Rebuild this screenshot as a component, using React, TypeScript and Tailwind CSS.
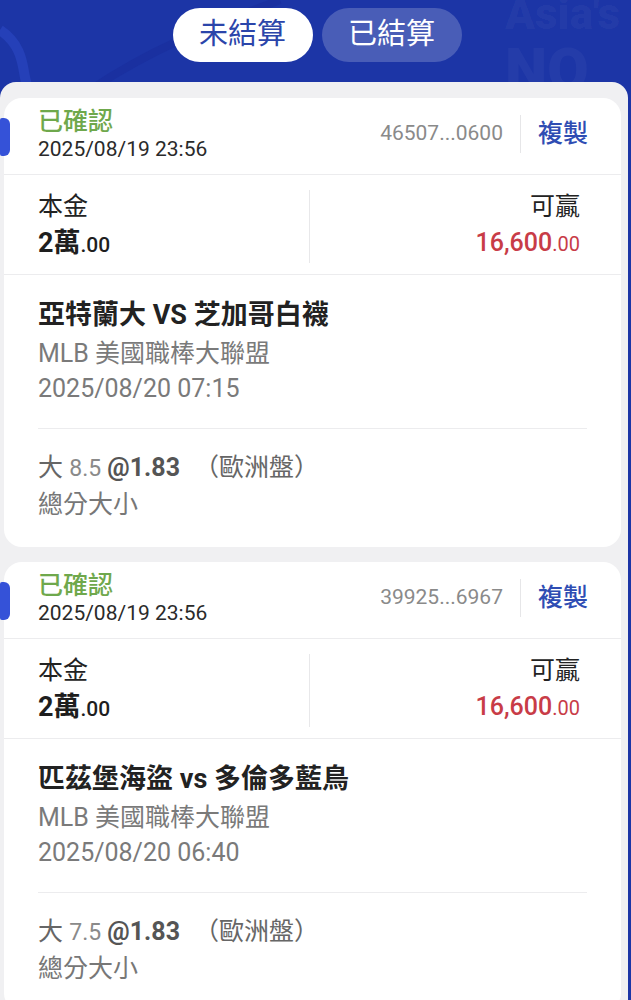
import React from 'react';

interface Bet {
  id: string;
  placed: string;
  match: string;
  league: string;
  kickoff: string;
  line: string;
}

const bets: Bet[] = [
  {
    id: '46507...0600',
    placed: '2025/08/19 23:56',
    match: '亞特蘭大 VS 芝加哥白襪',
    league: 'MLB 美國職棒大聯盟',
    kickoff: '2025/08/20 07:15',
    line: '8.5',
  },
  {
    id: '39925...6967',
    placed: '2025/08/19 23:56',
    match: '匹茲堡海盜 vs 多倫多藍鳥',
    league: 'MLB 美國職棒大聯盟',
    kickoff: '2025/08/20 06:40',
    line: '7.5',
  },
];

const font = { fontFamily: 'Roboto, "Noto Sans CJK TC", "Noto Sans", sans-serif' };

function BetCard({ bet }: { bet: Bet }) {
  return (
    <div className="relative bg-white rounded-[18px]">
      <div className="absolute left-[-4px] top-[20px] w-[10px] h-[38px] rounded-r-[6px] rounded-l-[2px] bg-[#3552d8]" />

      <div className="flex items-center justify-between pl-[34px] pr-[33px] pt-[10px] pb-[12px] border-b border-[#ececee]">
        <div>
          <div className="text-[25px] leading-[28px] font-medium text-[#6fa84c]">已確認</div>
          <div className="text-[21px] leading-[26px] text-[#2a2a2a]">{bet.placed}</div>
        </div>
        <div className="flex items-center h-[38px] mt-[-2px]">
          <span className="text-[21px] text-[#8a8a8a]">{bet.id}</span>
          <div className="w-px self-stretch bg-[#e6e6e8] mx-[17px]" />
          <span className="text-[25px] font-medium text-[#2f4db3]">複製</span>
        </div>
      </div>

      <div className="flex pt-[15px] pb-[11px] border-b border-[#ececee]">
        <div className="flex-1 pl-[34px] pt-[3px]">
          <div className="text-[25px] leading-[28px] text-[#222]">本金</div>
          <div className="mt-[6px] leading-[32px] text-[#1e1e1e]">
            <span className="text-[27px] font-bold">2萬</span>
            <span className="text-[21px] font-medium">.00</span>
          </div>
        </div>
        <div className="w-px bg-[#e8e8ea]" />
        <div className="flex-1 pr-[41px] pt-[3px] text-right">
          <div className="text-[25px] leading-[28px] text-[#222]">可贏</div>
          <div className="mt-[6px] leading-[32px] text-[#c83c47]">
            <span className="text-[25px] font-medium">16,600</span>
            <span className="text-[20px]">.00</span>
          </div>
        </div>
      </div>

      <div className="px-[34px] pt-[24px] pb-[24px]">
        <div className="text-[27px] leading-[32px] font-bold text-[#222]">{bet.match}</div>
        <div className="mt-[8px] text-[25px] leading-[30px] text-[#7a7a7a]">{bet.league}</div>
        <div className="mt-[5px] text-[25px] leading-[30px] text-[#7a7a7a]">{bet.kickoff}</div>
      </div>
      <div className="mx-[34px] h-px bg-[#ececee]" />

      <div className="px-[34px] pt-[24px] pb-[27px] text-[#666]">
        <div className="text-[25px] leading-[30px] whitespace-nowrap">
          <span>大 </span>
          <span className="text-[23px] text-[#8a8a8a]">{bet.line}</span>
          <span className="font-bold text-[#555]"> @1.83</span>
          <span className="ml-[14px]">（歐洲盤）</span>
        </div>
        <div className="mt-[6px] text-[25px] leading-[30px] text-[#777]">總分大小</div>
      </div>
    </div>
  );
}

export default function App() {
  return (
    <div className="w-[631px] h-[1000px] overflow-hidden bg-[#1c35a6]" style={font}>
      <div className="relative h-[90px] overflow-hidden">
        <svg className="absolute inset-0" width="631" height="90" viewBox="0 0 631 90">
          <path d="M0 30 C 30 50, 20 80, 30 90" stroke="#2540b8" strokeWidth="10" fill="none" />
          <path d="M90 90 C 150 50, 200 30, 280 0" stroke="#1a30a0" strokeWidth="8" fill="none" />
        </svg>
        <div className="absolute left-[505px] top-[-8px] text-[44px] leading-[44px] font-black text-white/[0.04] whitespace-nowrap">
          Asia's
        </div>
        <div className="absolute left-[505px] top-[40px] text-[60px] leading-[60px] font-black text-white/[0.04] whitespace-nowrap">
          NO
        </div>
        <div className="relative flex justify-center gap-[9px] pt-[8px] pl-[3px]">
          <div className="w-[140px] h-[54px] rounded-full bg-white flex items-center justify-center text-[29px] text-[#2b45aa]">
            未結算
          </div>
          <div className="w-[140px] h-[54px] rounded-full bg-white/20 flex items-center justify-center text-[29px] text-white">
            已結算
          </div>
        </div>
      </div>
      <div className="mt-[-8px] relative bg-[#f0f0f2] rounded-t-[16px] mr-[3px] pl-[4px] pr-[7px] pt-[16px] h-[920px] flex flex-col gap-[15px]">
        {bets.map((b) => (
          <BetCard key={b.id} bet={b} />
        ))}
      </div>
    </div>
  );
}
